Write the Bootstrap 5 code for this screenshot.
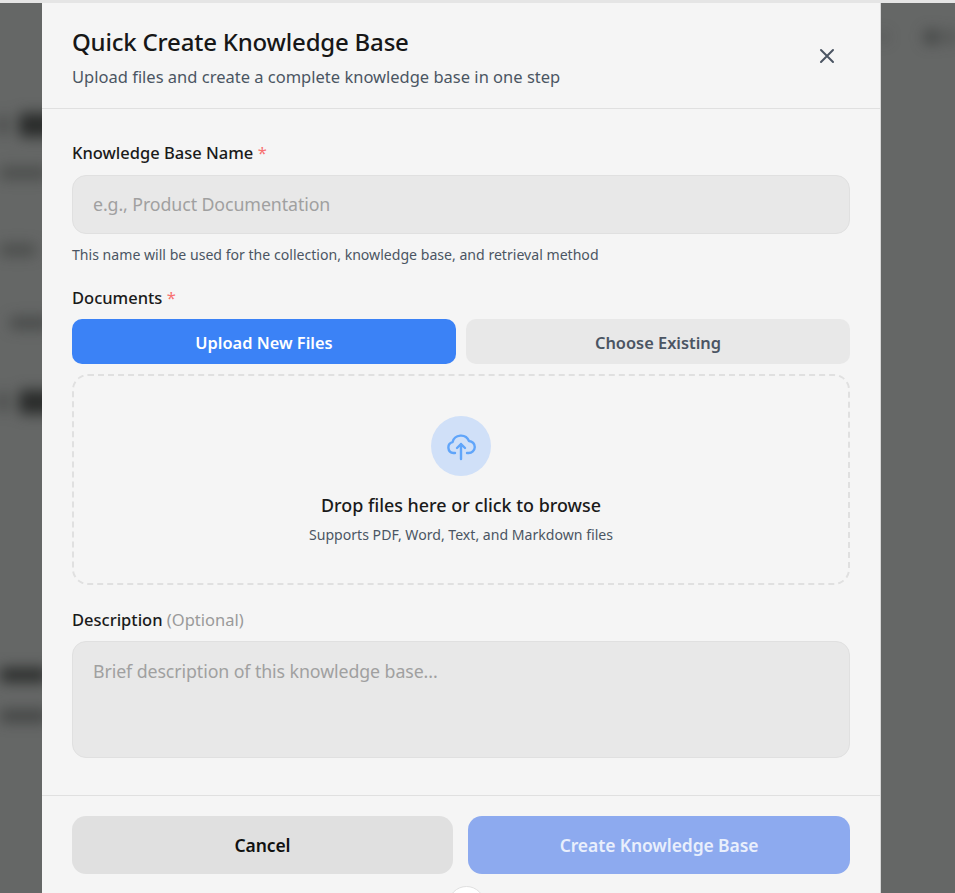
<!doctype html>
<html lang="en">
<head>
<meta charset="utf-8">
<title>Quick Create Knowledge Base</title>
<link href="https://cdn.jsdelivr.net/npm/bootstrap@5.3.0/dist/css/bootstrap.min.css" rel="stylesheet">
<style>
html,body{height:100%;overflow:hidden}
body{background:#656766;font-family:"Noto Sans",sans-serif;color:#1a1a1a}
.page-strip{height:3px;background:#e5e5e5;position:absolute;top:0;left:0;right:0;z-index:3}
.blur-layer{position:absolute;inset:0;filter:blur(7px);overflow:hidden}
.blob{position:absolute;background:#2a2c2b;border-radius:4px}
.b1{left:19px;top:113px;width:34px;height:24px}
.b1a{left:-12px;top:115px;width:17px;height:20px;opacity:.9}
.b2{left:0;top:167px;width:48px;height:12px;opacity:.45}
.b3{left:0;top:244px;width:36px;height:12px;opacity:.45}
.b4{left:10px;top:317px;width:40px;height:12px;opacity:.5}
.b5{left:19px;top:390px;width:34px;height:24px}
.b5a{left:-12px;top:392px;width:17px;height:20px;opacity:.9}
.b6{left:0;top:668px;width:48px;height:14px}
.b7{left:0;top:710px;width:48px;height:12px;opacity:.6}
.b8{left:878px;top:32px;width:10px;height:10px;opacity:.3}
.b9{left:924px;top:30px;width:16px;height:14px;opacity:.55}
.b10{left:946px;top:31px;width:16px;height:12px;opacity:.45}
.sheet{position:relative;z-index:2;width:839px;height:890px;margin:3px 0 0 42px;overflow:hidden}
.sheet.modal-content{border:0;border-right:1px solid #d6d6d6;border-radius:0;background:#f5f5f5}
.sheet-head{height:106px;padding:24px 30px 0;border-bottom:1px solid #e0e0e0;display:flex;justify-content:space-between}
.sheet-title{font-size:24px;font-weight:500;line-height:30px;margin:0;letter-spacing:-.2px;color:#171717}
.sheet-sub{font-size:16.5px;line-height:24px;margin:8px 0 0;color:#4b5563}
.close-x{background:none;border:0;padding:0;width:20px;height:20px;margin:15px 13px 0 0;color:#4b5563}
.sheet-body{padding:32px 30px 0;height:686px}
.fld-label{display:block;font-size:16.5px;font-weight:500;line-height:24px;margin:0 0 10px;color:#1a1a1a}
.req{color:#f87171;font-weight:400}
.opt{color:#9a9a9a;font-weight:400}
.fld-input{height:59px;border-radius:14px;background:#e8e8e8;border:1px solid #e0e0e0;padding:0 20px 2px;font-size:17.8px;box-shadow:none;letter-spacing:-.1px;width:778px}
.fld-input::placeholder{color:#a0a0a0;opacity:1}
.fld-area{height:117px;padding:16px 20px;resize:none;line-height:27px}
.fld-hint{font-size:14.1px;line-height:20px;color:#4b5563;margin:11px 0 21px}
.tab-row{margin-top:-1px;width:778px;gap:10px}
.tab-btn{flex:1 1 0;height:45px;border:0;border-radius:10px;font-size:16.4px;font-weight:600;padding:3px 0 0}
.tab-on,.tab-on:hover{background:#3b82f6;color:#fff}
.tab-off,.tab-off:hover{background:#e8e8e8;color:#4b5563}
.drop-zone{height:211px;width:778px;margin-top:10px;border:2px dashed #e0e0e0;border-radius:16px;padding-top:40px;text-align:center}
.up-icon{width:60px;height:60px;border-radius:50%;background:#d0e0f8;color:#60a5fa;margin-bottom:15px}
.drop-title{font-size:17.9px;font-weight:500;line-height:28px;margin:0;color:#1a1a1a}
.drop-sub{font-size:14.1px;line-height:20px;margin:6px 0 0;color:#4b5563}
.desc-wrap{margin-top:23px}
.desc-wrap .fld-label{margin-bottom:9px}
.sheet-foot{height:97px;padding:20px 30px 0;border-top:1px solid #e0e0e0;gap:15px}
.foot-btn{height:58px;border:0;border-radius:14px;font-size:17.5px;font-weight:600;letter-spacing:-.1px;padding:0}
.foot-cancel,.foot-cancel:hover{width:381px;background:#e0e0e0;color:#111}
.foot-create,.foot-create:hover{width:382px;background:#8daaef;color:#e9effc}
.peek{position:absolute;z-index:4;left:448px;top:886px;width:37px;height:37px;border-radius:50%;background:#fff;border:1px solid #e0e0e0}
</style>
</head>
<body>
<div class="page-strip"></div>
<div class="blur-layer" aria-hidden="true">
  <div class="blob b1"></div><div class="blob b1a"></div><div class="blob b2"></div><div class="blob b3"></div><div class="blob b4"></div><div class="blob b5"></div><div class="blob b5a"></div><div class="blob b6"></div><div class="blob b7"></div><div class="blob b8"></div><div class="blob b9"></div><div class="blob b10"></div>
</div>
<div class="modal-content sheet">
  <div class="sheet-head">
    <div>
      <h1 class="sheet-title">Quick Create Knowledge Base</h1>
      <p class="sheet-sub">Upload files and create a complete knowledge base in one step</p>
    </div>
    <button class="close-x" type="button" aria-label="Close">
      <svg width="20" height="20" viewBox="0 0 20 20" fill="none" stroke="currentColor" stroke-width="2" stroke-linecap="round"><path d="M4 4l12 12M16 4L4 16"/></svg>
    </button>
  </div>
  <div class="sheet-body">
    <label class="fld-label" for="kbname">Knowledge Base Name <span class="req">*</span></label>
    <input id="kbname" class="form-control fld-input" placeholder="e.g., Product Documentation">
    <p class="fld-hint">This name will be used for the collection, knowledge base, and retrieval method</p>
    <div class="fld-label tab-label">Documents <span class="req">*</span></div>
    <div class="d-flex tab-row">
      <button type="button" class="btn tab-btn tab-on">Upload New Files</button>
      <button type="button" class="btn tab-btn tab-off">Choose Existing</button>
    </div>
    <div class="drop-zone">
      <div class="up-icon d-inline-flex align-items-center justify-content-center">
        <svg width="30" height="30" viewBox="0 0 30 30" fill="none" stroke="currentColor" stroke-width="2.4" stroke-linecap="round" stroke-linejoin="round"><path d="M9 22H7.5a5.5 5.5 0 0 1-1-10.8A8.7 8.7 0 0 1 23 10a6 6 0 0 1-.5 12H21"/><path d="M15 28V13M11 17l4-4 4 4"/></svg>
      </div>
      <p class="drop-title">Drop files here or click to browse</p>
      <p class="drop-sub">Supports PDF, Word, Text, and Markdown files</p>
    </div>
    <div class="desc-wrap">
      <label class="fld-label" for="kbdesc">Description <span class="opt">(Optional)</span></label>
      <textarea id="kbdesc" class="form-control fld-input fld-area" placeholder="Brief description of this knowledge base..."></textarea>
    </div>
  </div>
  <div class="sheet-foot d-flex">
    <button type="button" class="btn foot-btn foot-cancel">Cancel</button>
    <button type="button" class="btn foot-btn foot-create">Create Knowledge Base</button>
  </div>
</div>
<div class="peek"></div>
<script src="https://cdn.jsdelivr.net/npm/bootstrap@5.3.0/dist/js/bootstrap.bundle.min.js"></script>
</body>
</html>
